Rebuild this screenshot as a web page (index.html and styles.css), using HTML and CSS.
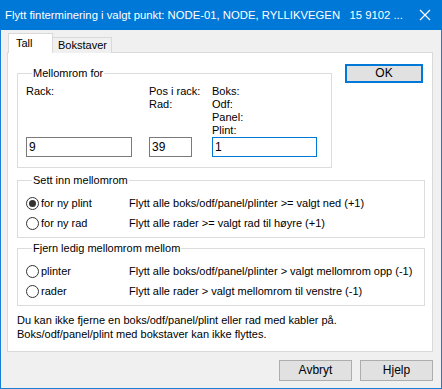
FILE: index.html
```html
<!DOCTYPE html>
<html>
<head>
<meta charset="utf-8">
<link rel="stylesheet" href="styles.css">
</head>
<body>
<div class="window">
  <div class="titlebar">
    <span class="title">Flytt finterminering i valgt punkt: NODE-01, NODE, RYLLIKVEGEN &nbsp; 15 9102 ...</span>
    <svg class="close" width="12" height="12" viewBox="0 0 12 12"><path d="M1 1 L11 11 M11 1 L1 11" stroke="#fff" stroke-width="1.2" fill="none"/></svg>
  </div>
  <div class="client">
    <div class="tabs">
      <div class="tab active">Tall</div>
      <div class="tab">Bokstaver</div>
    </div>
    <div class="panel">
      <div class="toprow">
        <fieldset class="group g1">
          <legend>Mellomrom for</legend>
          <div class="cols">
            <div class="col c1">
              <div class="labels">Rack:</div>
              <div class="input w1">9</div>
            </div>
            <div class="col c2">
              <div class="labels">Pos i rack:<br>Rad:</div>
              <div class="input w2">39</div>
            </div>
            <div class="col c3">
              <div class="labels">Boks:<br>Odf:<br>Panel:<br>Plint:</div>
              <div class="input w3 focus">1</div>
            </div>
          </div>
        </fieldset>
        <div class="btn default">OK</div>
      </div>
      <fieldset class="group g2">
        <legend>Sett inn mellomrom</legend>
        <div class="row"><span class="radio checked"></span><span class="opt">for ny plint</span><span class="desc">Flytt alle boks/odf/panel/plinter &gt;= valgt ned (+1)</span></div>
        <div class="row"><span class="radio"></span><span class="opt">for ny rad</span><span class="desc">Flytt alle rader &gt;= valgt rad til høyre (+1)</span></div>
      </fieldset>
      <fieldset class="group g3">
        <legend>Fjern ledig mellomrom mellom</legend>
        <div class="row"><span class="radio"></span><span class="opt">plinter</span><span class="desc">Flytt alle boks/odf/panel/plinter &gt; valgt mellomrom opp (-1)</span></div>
        <div class="row"><span class="radio"></span><span class="opt">rader</span><span class="desc">Flytt alle rader &gt; valgt mellomrom til venstre (-1)</span></div>
      </fieldset>
      <div class="note">Du kan ikke fjerne en boks/odf/panel/plint eller rad med kabler på.<br>Boks/odf/panel/plint med bokstaver kan ikke flyttes.</div>
    </div>
    <div class="buttons">
      <div class="btn">Avbryt</div>
      <div class="btn">Hjelp</div>
    </div>
  </div>
</div>
</body>
</html>
```
FILE: styles.css
```css
html, body { margin: 0; padding: 0; }
body {
  font-family: "Liberation Sans", Arial, sans-serif;
  font-size: 11px;
  color: #000;
  background: #f0f0f0;
}
.window {
  width: 442px;
  height: 389px;
  box-sizing: border-box;
  border: 1px solid #1a7fd4;
  border-top: none;
  background: #f0f0f0;
  display: flex;
  flex-direction: column;
}
.titlebar {
  height: 30px;
  margin: 0 -1px;
  background: #0078d7;
  color: #fff;
  display: flex;
  align-items: center;
  padding-left: 5px;
  padding-right: 11px;
  font-size: 11.3px;
}
.title { flex: 1; white-space: nowrap; }
.close { display: block; }
.client {
  padding: 3px 8px 0 6px;
  flex: 1;
  display: flex;
  flex-direction: column;
}
.tabs {
  display: flex;
  align-items: flex-end;
  height: 19px;
  padding-left: 1px;
  position: relative;
  z-index: 1;
}
.tab {
  box-sizing: border-box;
  border: 1px solid #d9d9d9;
  border-bottom: none;
  background: #f0f0f0;
  height: 16px;
  line-height: 15px;
  padding: 0 4px 0 5px;
  margin-bottom: -1px;
}
.tab.active {
  background: #fff;
  height: 20px;
  line-height: 19px;
  width: 45px;
  padding: 0 0 0 7px;
  margin-right: -1px;
  position: relative;
  z-index: 2;
}
.panel {
  background: #fff;
  border: 1px solid #d9d9d9;
  width: 426px;
  height: 300px;
  box-sizing: border-box;
  padding: 13px 0 0 9px;
}
.toprow { display: flex; align-items: flex-start; }
fieldset.group {
  margin: 0;
  border: 1px solid #dcdcdc;
  box-sizing: border-box;
  padding: 0 0 0 8px;
}
legend {
  padding: 0 1px;
  margin-left: 6px;
  line-height: 14px;
}
.g1 { width: 315px; height: 102px; }
.cols { display: flex; padding-top: 5px; }
.col { display: flex; flex-direction: column; }
.c1 { width: 123px; }
.c2 { width: 63px; }
.labels { line-height: 13px; height: 52px; }
.input {
  box-sizing: border-box;
  height: 20px;
  border: 1px solid #7a7a7a;
  line-height: 18px;
  padding-left: 2px;
  background: #fff;
  font-size: 12px;
}
.w1 { width: 106px; }
.w2 { width: 43px; }
.w3 { width: 105px; }
.input.focus { border-color: #0078d7; }
.btn {
  box-sizing: border-box;
  width: 73px;
  height: 21px;
  border: 1px solid #adadad;
  background: #e1e1e1;
  text-align: center;
  line-height: 19px;
  font-size: 12px;
}
.btn.default {
  border: 2px solid #0078d7;
  width: 78px;
  height: 19px;
  line-height: 15px;
  margin-left: 13px;
  margin-top: -2px;
}
fieldset.g2, fieldset.g3 { width: 408px; height: 65px; }
fieldset.g2 { margin-top: 5px; }
fieldset.g3 { margin-top: 3px; }
.row {
  display: flex;
  align-items: center;
  height: 20px;
  white-space: nowrap;
}
.row:first-of-type { margin-top: 6px; }
.radio {
  width: 11px;
  height: 11px;
  border: 1px solid #333;
  border-radius: 50%;
  box-sizing: content-box;
  margin-right: 2px;
  position: relative;
  background: #fff;
  flex: none;
}
.radio.checked::after {
  content: "";
  position: absolute;
  left: 2px; top: 2px;
  width: 7px; height: 7px;
  border-radius: 50%;
  background: #333;
}
.opt { width: 88px; }
.note {
  margin-top: 7px;
  line-height: 14px;
}
.buttons {
  display: flex;
  justify-content: flex-end;
  gap: 8px;
  margin-top: 8px;
}
```
